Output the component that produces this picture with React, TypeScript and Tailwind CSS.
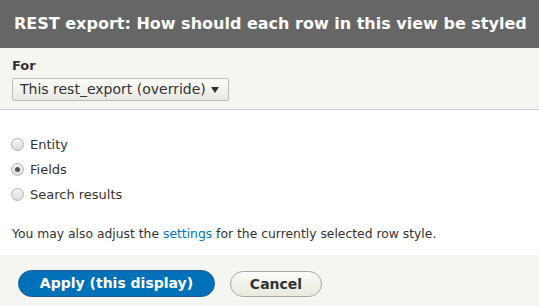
import React from "react";

const Radio: React.FC<{ label: string; checked?: boolean }> = ({ label, checked }) => (
  <label className="flex items-center h-[25px] text-[13px] text-[#333]">
    <span className="w-[13px] h-[13px] rounded-full border border-[#b3b3b3] bg-gradient-to-b from-[#f4f4f4] to-[#dcdcdc] flex items-center justify-center mr-[6px]">
      {checked && <span className="w-[5px] h-[5px] rounded-full bg-[#555]" />}
    </span>
    {label}
  </label>
);

const App: React.FC = () => {
  return (
    <div className="w-[539px] h-[306px] flex flex-col bg-white font-['DejaVu_Sans',sans-serif]">
      <div className="h-[48px] bg-[#666] text-white font-bold text-[16px] whitespace-nowrap overflow-hidden flex items-center pl-[14px] shrink-0">
        REST export: How should each row in this view be styled
      </div>

      <div className="bg-[#f5f5f2] border-b border-[#ccc] px-[12px] pt-[10px] h-[62px] shrink-0">
        <div className="text-[13px] font-bold text-[#333] leading-[16px] mb-[3px]">For</div>
        <div className="inline-flex items-center h-[23px] w-[217px] border border-[#bbb] rounded-[2px] bg-gradient-to-b from-[#fcfcfa] to-[#e9e9e4] pl-[7px] pr-[9px] text-[14px] text-[#333]">
          <span className="flex-1">This rest_export (override)</span>
          <svg width="8" height="6" viewBox="0 0 8 6">
            <path d="M0 0 L8 0 L4 6 Z" fill="#333" />
          </svg>
        </div>
      </div>

      <div className="flex-1 px-[11px] pt-[22px]">
        <Radio label="Entity" />
        <Radio label="Fields" checked />
        <Radio label="Search results" />
        <p className="text-[12.35px] text-[#333] mt-[18px] ml-px">
          You may also adjust the <a className="text-[#0074bd]">settings</a> for the currently selected row style.
        </p>
      </div>

      <div className="h-[51px] bg-[#f5f5f2] flex items-start pt-[15px] gap-[15px] px-[18px] shrink-0">
        <button className="h-[27px] w-[197px] rounded-full bg-[#0071b8] border border-[#1e5c90] text-white font-bold text-[14px]">
          Apply (this display)
        </button>
        <button className="h-[26px] mt-px w-[92px] rounded-full bg-gradient-to-b from-[#fcfcfa] to-[#e9e9dd] border border-[#a6a6a6] text-[#333] font-bold text-[14px]">
          Cancel
        </button>
      </div>
    </div>
  );
};

export default App;
